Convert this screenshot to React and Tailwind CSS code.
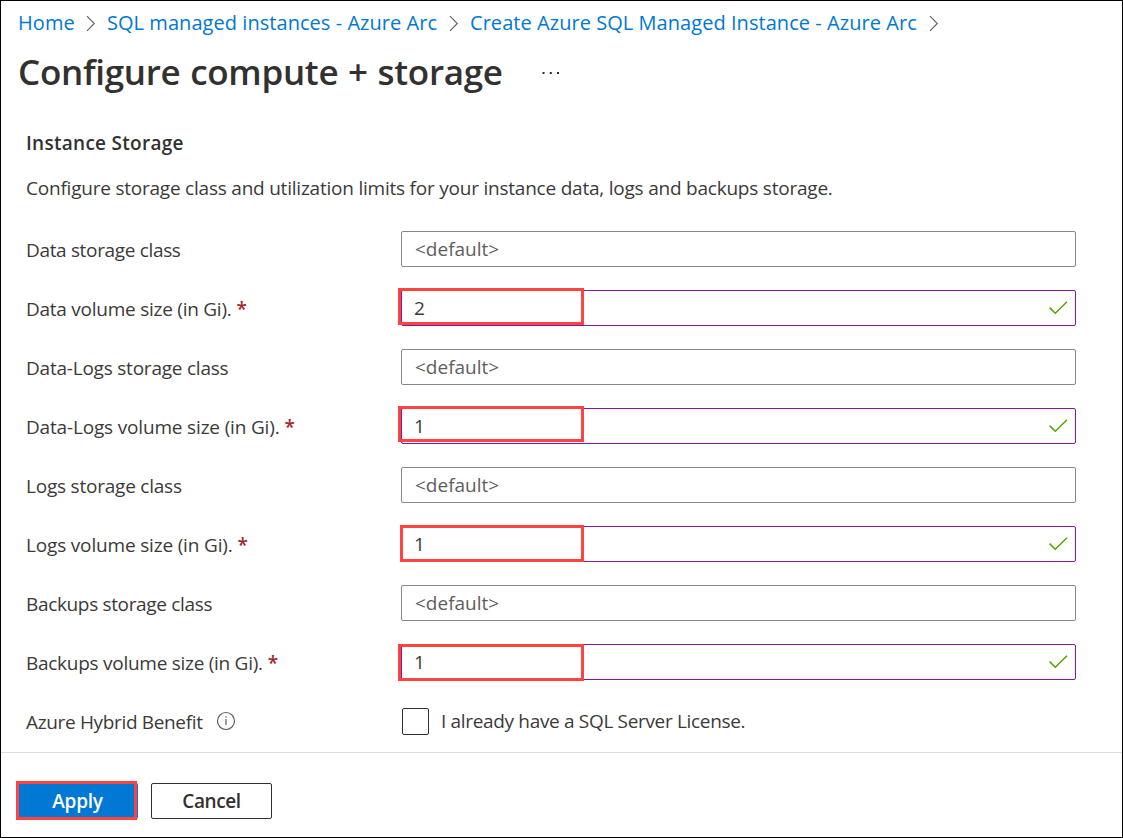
import React from "react";

const rows = [
  { label: "Data storage class", tracking: "tracking-[-0.34px]" },
  { label: "Data volume size (in Gi).", value: "2", tracking: "tracking-[-0.25px]", mark: "left-[-4px] top-[-3px] w-[186px] h-[37px]" },
  { label: "Data-Logs storage class", tracking: "tracking-[-0.22px]" },
  { label: "Data-Logs volume size (in Gi).", value: "1", tracking: "tracking-[-0.17px]", mark: "left-[-4px] top-[-3px] w-[186px] h-[36px]" },
  { label: "Logs storage class", tracking: "tracking-[-0.22px]" },
  { label: "Logs volume size (in Gi).", value: "1", tracking: "tracking-[-0.17px]", mark: "left-[-2px] top-[-2px] w-[184px] h-[37px]" },
  { label: "Backups storage class", tracking: "tracking-[-0.34px]" },
  { label: "Backups volume size (in Gi).", value: "1", tracking: "tracking-[-0.27px]", mark: "left-[-4px] top-[-1px] w-[186px] h-[37px]" },
];

function Chevron() {
  return (
    <svg className="h-[17px] w-[10px] shrink-0" viewBox="0 0 10 17" fill="none" stroke="#605e5c" strokeWidth="1.1">
      <path d="M1 1.2 8.3 8.5 1 15.8" />
    </svg>
  );
}

function Check() {
  return (
    <svg className="mr-[7px] h-[14px] w-[19px]" viewBox="0 0 19 14" fill="none" stroke="#57a300" strokeWidth="1.5">
      <path d="M.6 6.6 6.3 12.3 18 .8" />
    </svg>
  );
}

function Field({ row }) {
  const filled = row.value !== undefined;
  return (
    <div className="flex h-[36px] items-center">
      <div className={"w-[375px] whitespace-nowrap pt-[1px] " + row.tracking}>
        {row.label}
        {filled && <span className="ml-[5px] font-semibold text-[#a4262c]">*</span>}
      </div>
      <div
        className={
          "relative flex h-[36px] w-[675px] items-center justify-between rounded-[2px] border " +
          (filled ? "border-[#881798] pl-[12px]" : "border-[#8a8886] pl-[13px] tracking-[0px] text-[#605e5c]")
        }
      >
        <span>{filled ? row.value : "<default>"}</span>
        {filled && <Check />}
        {filled && <div className={"absolute border-[3px] border-[#ff4343] " + row.mark} />}
      </div>
    </div>
  );
}

export default function App() {
  return (
    <div className="flex h-[838px] w-[1123px] flex-col overflow-hidden border border-black bg-white font-['Open_Sans',sans-serif] text-[19px] leading-[26px] tracking-[-0.22px] text-[#3b3a39]">
      <nav className="flex h-[44px] items-center whitespace-nowrap pl-[17px] text-[20px] tracking-[0.05px] text-[#0078d4]">
        <a className="w-[68px]">Home</a>
        <Chevron />
        <a className="ml-[11px] w-[342px]">SQL managed instances - Azure Arc</a>
        <Chevron />
        <a className="ml-[11px] w-[459px]">Create Azure SQL Managed Instance - Azure Arc</a>
        <Chevron />
      </nav>
      <header className="flex h-[56px] items-center whitespace-nowrap pl-[17px]">
        <h1 className="mt-[-2px] w-[524px] text-[35px] font-semibold leading-[48px] tracking-[-0.3px] text-[#323130] [word-spacing:1px]">Configure compute + storage</h1>
        <svg className="h-[4px] w-[18px]" viewBox="0 0 18 4" fill="#323130">
          <path d="M.5 1h2v2h-2zM7.8 1h2v2h-2zM15 1h2v2h-2z" />
        </svg>
      </header>
      <main className="flex flex-col whitespace-nowrap pl-[25px]">
        <h2 className="mt-[29px] font-semibold tracking-[0.28px] text-[#323130]">Instance Storage</h2>
        <p className="mt-[19px]">Configure storage class and utilization limits for your instance data, logs and backups storage.</p>
        <div className="mt-[30px] flex flex-col gap-[23px]">
          {rows.map((row) => (
            <Field key={row.label} row={row} />
          ))}
        </div>
        <div className="mt-[23px] flex h-[36px] items-center">
          <div className="flex w-[376px] items-center">
            <span className="w-[190px] pt-[1px] tracking-[-0.34px]">Azure Hybrid Benefit</span>
            <svg className="h-[20px] w-[20px]" viewBox="0 0 20 20" fill="none" stroke="#605e5c" strokeWidth="1.2">
              <circle cx="10" cy="10" r="8.5" />
              <path d="M10 8v6M10 5.2v1.6" />
            </svg>
          </div>
          <div className="h-[27px] w-[27px] rounded-[2px] border border-[#323130]" />
          <span className="ml-[12px] tracking-[-0.33px]">I already have a SQL Server License.</span>
        </div>
      </main>
      <footer className="mt-[13px] flex grow border-t border-[#dcdcdc] pl-[16px] pt-[30px] font-semibold">
        <button className="relative flex h-[36px] w-[121px] items-center justify-center rounded-[2px] bg-[#0078d4] text-white">
          Apply
          <span className="absolute left-[-1px] top-[-2px] h-[39px] w-[121px] border-[3px] border-[#ff4343]" />
        </button>
        <button className="ml-[13px] flex h-[36px] w-[121px] items-center justify-center rounded-[2px] border border-[#323130] tracking-[-0.4px] text-[#323130]">Cancel</button>
      </footer>
    </div>
  );
}
